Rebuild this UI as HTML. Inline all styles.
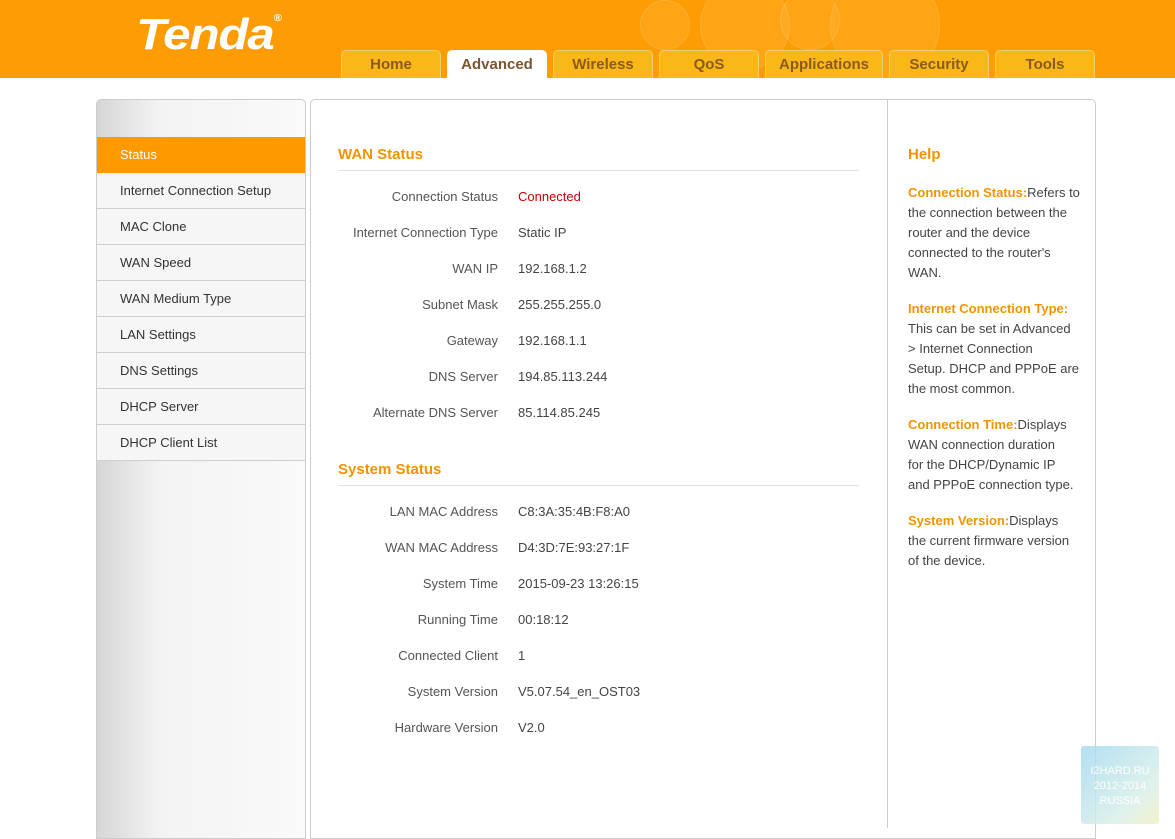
<!DOCTYPE html>
<html><head><meta charset="utf-8"><style>
*{margin:0;padding:0;box-sizing:border-box}
body{width:1175px;height:828px;overflow:hidden;background:#fff;font-family:"Liberation Sans",sans-serif;font-size:13px;color:#444;position:relative}
.hdr{position:absolute;left:0;top:0;width:1175px;height:78px;background:#fe9c05;overflow:hidden}
.bub{position:absolute;border-radius:50%;background:rgba(255,220,140,.12);border:1px solid rgba(255,230,170,.18)}
.logo{position:absolute;left:136px;top:10px;font:italic bold 44px "Liberation Sans",sans-serif;color:#fff;letter-spacing:-1px;transform:scaleX(1.12);transform-origin:left}
.logo sup{font-size:10px;font-style:normal;position:relative;top:-12px}
.tab{position:absolute;top:50px;height:29px;background:#f9b818;border:1px solid #f3cf6a;border-bottom:none;border-radius:5px 5px 0 0;text-align:center;font:bold 15px "Liberation Sans",sans-serif;color:#8b5a1e;line-height:28px}
.tab.on{background:#fff;color:#7a5530;border-color:#fff}
.side{position:absolute;left:96px;top:99px;width:210px;height:740px;border:1px solid #ccc;border-radius:5px 5px 0 0;background:linear-gradient(90deg,#d6d6d6,#f3f3f3 30%,#fafafa)}
.si{position:absolute;left:0;width:208px;height:36px;border-bottom:1px solid #cfcfcf;padding-left:23px;line-height:36px;color:#333;background:#f6f6f6}
.si.on{background:#fe9a00;color:#fff;border-bottom:none}
.main{position:absolute;left:310px;top:99px;width:786px;height:740px;border:1px solid #ccc;border-radius:5px 5px 0 0}
.div{position:absolute;left:887px;top:100px;width:1px;height:728px;background:#ccc}
h2{position:absolute;font:bold 15px "Liberation Sans",sans-serif;color:#f29400}
.hr{position:absolute;left:338px;width:521px;height:1px;background:#e3e3e3}
.lb{position:absolute;right:677px;text-align:right;color:#555;white-space:nowrap}
.vl{position:absolute;left:518px;color:#444;white-space:nowrap}
.help{position:absolute;left:908px;top:183px;width:185px;line-height:20px;color:#444;font-size:13px;white-space:nowrap}
.help b{color:#f29400;font-weight:bold}
.help p{margin-bottom:16px}
.wm{position:absolute;left:1081px;top:746px;width:78px;height:78px;background:linear-gradient(135deg,#9fd8f0,#d8efe8 70%,#f0f0c0);opacity:.8;border-radius:3px;color:#fff;font:11px "Liberation Sans",sans-serif;text-align:center;padding-top:18px;line-height:15px}
</style></head><body>
<div class="hdr">
<div class="bub" style="left:700px;top:-20px;width:90px;height:90px"></div>
<div class="bub" style="left:780px;top:-10px;width:60px;height:60px"></div>
<div class="bub" style="left:830px;top:-30px;width:110px;height:110px"></div>
<div class="bub" style="left:640px;top:0px;width:50px;height:50px"></div>
<div class="logo">Tenda<sup>®</sup></div>
<div class="tab" style="left:341px;width:100px">Home</div>
<div class="tab on" style="left:447px;width:100px">Advanced</div>
<div class="tab" style="left:553px;width:100px">Wireless</div>
<div class="tab" style="left:659px;width:100px">QoS</div>
<div class="tab" style="left:765px;width:118px">Applications</div>
<div class="tab" style="left:889px;width:100px">Security</div>
<div class="tab" style="left:995px;width:100px">Tools</div>
</div>
<div class="side">
<div class="si on" style="top:37px">Status</div>
<div class="si" style="top:73px">Internet Connection Setup</div>
<div class="si" style="top:109px">MAC Clone</div>
<div class="si" style="top:145px">WAN Speed</div>
<div class="si" style="top:181px">WAN Medium Type</div>
<div class="si" style="top:217px">LAN Settings</div>
<div class="si" style="top:253px">DNS Settings</div>
<div class="si" style="top:289px">DHCP Server</div>
<div class="si" style="top:325px">DHCP Client List</div>
</div>
<div class="main"></div>
<div class="div"></div>
<h2 style="left:338px;top:146px">WAN Status</h2>
<div class="hr" style="top:170px"></div>
<div class="lb" style="top:189px">Connection Status</div><div class="vl" style="top:189px;color:#c00">Connected</div>
<div class="lb" style="top:225px">Internet Connection Type</div><div class="vl" style="top:225px">Static IP</div>
<div class="lb" style="top:261px">WAN IP</div><div class="vl" style="top:261px">192.168.1.2</div>
<div class="lb" style="top:297px">Subnet Mask</div><div class="vl" style="top:297px">255.255.255.0</div>
<div class="lb" style="top:333px">Gateway</div><div class="vl" style="top:333px">192.168.1.1</div>
<div class="lb" style="top:369px">DNS Server</div><div class="vl" style="top:369px">194.85.113.244</div>
<div class="lb" style="top:405px">Alternate DNS Server</div><div class="vl" style="top:405px">85.114.85.245</div>
<h2 style="left:338px;top:461px">System Status</h2>
<div class="hr" style="top:485px"></div>
<div class="lb" style="top:504px">LAN MAC Address</div><div class="vl" style="top:504px">C8:3A:35:4B:F8:A0</div>
<div class="lb" style="top:540px">WAN MAC Address</div><div class="vl" style="top:540px">D4:3D:7E:93:27:1F</div>
<div class="lb" style="top:576px">System Time</div><div class="vl" style="top:576px">2015-09-23 13:26:15</div>
<div class="lb" style="top:612px">Running Time</div><div class="vl" style="top:612px">00:18:12</div>
<div class="lb" style="top:648px">Connected Client</div><div class="vl" style="top:648px">1</div>
<div class="lb" style="top:684px">System Version</div><div class="vl" style="top:684px">V5.07.54_en_OST03</div>
<div class="lb" style="top:720px">Hardware Version</div><div class="vl" style="top:720px">V2.0</div>
<h2 style="left:908px;top:146px">Help</h2>
<div class="help">
<p><b>Connection Status:</b>Refers to<br>the connection between the<br>router and the device<br>connected to the router's<br>WAN.</p>
<p><b>Internet Connection Type:</b><br>This can be set in Advanced<br>&gt; Internet Connection<br>Setup. DHCP and PPPoE are<br>the most common.</p>
<p><b>Connection Time:</b>Displays<br>WAN connection duration<br>for the DHCP/Dynamic IP<br>and PPPoE connection type.</p>
<p><b>System Version:</b>Displays<br>the current firmware version<br>of the device.</p>
</div>
<div class="wm">I2HARD.RU<br>2012-2014<br>RUSSIA</div>
</body></html>
